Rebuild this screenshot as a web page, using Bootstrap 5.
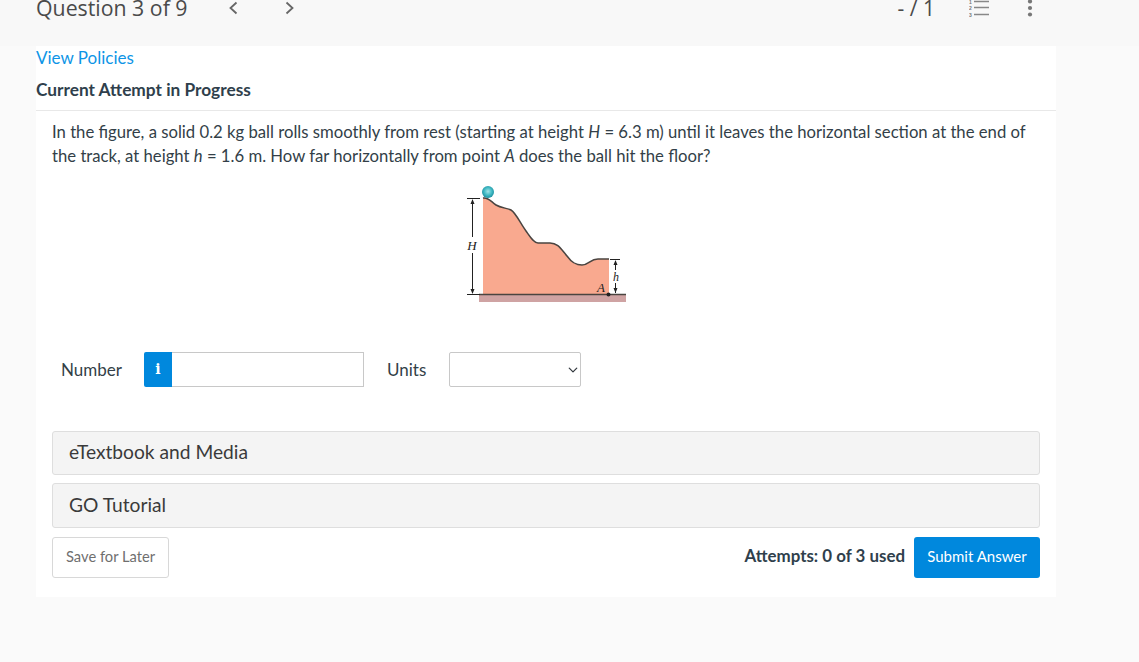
<!DOCTYPE html>
<html>
<head>
    <meta charset="utf-8">
    <link href="https://cdn.jsdelivr.net/npm/bootstrap@5.3.0/dist/css/bootstrap.min.css" rel="stylesheet">
    <style>
        body {
            background: #fafafa;
            font-family: Lato, "Liberation Sans", sans-serif;
            color: #2f3f4c;
            height: 662px;
            overflow: hidden;
        }

        /* top bar */
        .quiz-bar {
            height: 46px;
            background: #f8f8f8;
            padding: 0 106px 0 36px;
            overflow: hidden;
        }
        .quiz-title {
            font-family: "Open Sans", sans-serif;
            font-size: 21.3px;
            line-height: 28px;
            color: #4a4a4a;
            margin-top: -6px;
            width: 191px;
        }
        .quiz-score {
            font-family: "Open Sans", sans-serif;
            font-size: 21px;
            line-height: 28px;
            color: #4a4a4a;
            margin-top: -6px;
            margin-left: auto;
            margin-right: 34px;
        }
        .bar-icon { display: block; flex: none; }
        .next-icon { margin-left: 44px; }
        .more-icon { margin-left: 36px; }

        /* white panel */
        .quiz-panel {
            width: 1020px;
            height: 551px;
            margin-left: 36px;
            background: #fff;
        }
        .policy-link {
            display: block;
            font-size: 17px;
            line-height: 24px;
            color: #0e95e6;
            text-decoration: none;
        }
        .attempt-head {
            font-size: 17.3px;
            line-height: 24px;
            font-weight: 700;
            color: #2f3f4c;
            margin-top: 8px;
            padding-bottom: 8px;
            border-bottom: 1px solid #e8e8e8;
        }
        .question-text {
            font-size: 16.7px;
            line-height: 24px;
            color: #333f48;
            padding: 9px 16px 0;
            margin: 0;
        }
        .question-fig { display: block; margin: 7px 0 0 404px; }

        /* answer row */
        .answer-row { padding: 0 0 0 25px; margin-top: 42px; height: 35px; font-size: 17px; }
        .answer-label { width: 83px; color: #333f48; }
        .info-box {
            width: 28px;
            height: 35px;
            background: #0088dd;
            color: #fff;
            border-radius: 2px 0 0 2px;
            font-family: "DejaVu Serif", serif;
            font-weight: 700;
            font-size: 14px;
        }
        .number-input {
            width: 192px;
            height: 35px;
            border: 1px solid #c8c8c8;
            border-left: 0;
            border-radius: 0;
        }
        .units-label { width: 62px; margin-left: 23px; color: #333f48; }
        .units-select {
            width: 132px;
            height: 35px;
            padding: 0;
            border: 1px solid #c8c8c8;
            border-radius: 2px;
            background-position: right 1px center;
            background-size: 12px 10px;
        }

        /* accordions */
        .extra-block {
            margin: 0 16px;
            padding: 0 0 1px 16px;
            background: #f4f4f4;
            border: 1px solid #dedede;
            border-radius: 3px;
            font-size: 19.2px;
            color: #3a3a3a;
        }
        .extra-media { height: 44px; margin-top: 44px; }
        .extra-tutorial { height: 45px; margin-top: 8px; }

        /* footer row */
        .action-row { margin: 9px 16px 0; }
        .save-btn {
            height: 41px;
            padding: 0 13px 2px;
            font-size: 14.7px;
            color: #6f6f6f;
            background: #fff;
            border: 1px solid #d8d8d8;
            border-radius: 3px;
        }
        .attempts-text { font-size: 16.9px; font-weight: 700; color: #2f3f4c; margin-right: 9px; padding-bottom: 3px; }
        .submit-btn {
            height: 41px;
            width: 126px;
            padding: 0 0 2px;
            font-size: 15px;
            color: #fff;
            background: #0088dd;
            border: 0;
            border-radius: 3px;
        }
    </style>
</head>
<body>
    <div class="quiz-bar d-flex align-items-start">
        <div class="quiz-title">Question 3 of 9</div>
        <svg class="bar-icon" width="12" height="16" viewBox="0 0 12 16"><path d="M9.500 2.500 3.500 8l6 5.500" fill="none" stroke="#666" stroke-width="1.800"/></svg>
        <svg class="bar-icon next-icon" width="12" height="16" viewBox="0 0 12 16"><path d="M3.500 2.500 9.500 8l-6 5.500" fill="none" stroke="#666" stroke-width="1.800"/></svg>
        <div class="quiz-score">- / 1</div>
        <svg class="bar-icon" width="22" height="20" viewBox="0 0 22 20">
            <g fill="none" stroke="#888" stroke-width="1.600"><path d="M5 1.500h15M5 7.500h15M5 14.500h15"/></g>
            <text x="0" y="4" font-size="5" font-weight="700" fill="#777" font-family="Liberation Sans">1</text>
            <text x="0" y="10" font-size="5" font-weight="700" fill="#777" font-family="Liberation Sans">2</text>
            <text x="0" y="17" font-size="5" font-weight="700" fill="#777" font-family="Liberation Sans">3</text>
        </svg>
        <svg class="bar-icon more-icon" width="6" height="20" viewBox="0 0 6 20">
            <circle cx="3" cy="1.500" r="2.100" fill="#777"/><circle cx="3" cy="8" r="2.100" fill="#777"/><circle cx="3" cy="14.500" r="2.100" fill="#777"/>
        </svg>
    </div>

    <div class="quiz-panel">
        <a class="policy-link" href="#">View Policies</a>
        <div class="attempt-head">Current Attempt in Progress</div>
        <p class="question-text">In the figure, a solid 0.2 kg ball rolls smoothly from rest (starting at height <i>H</i> = 6.3 m) until it leaves the horizontal section at the end of the track, at height <i>h</i> = 1.6 m. How far horizontally from point <i>A</i> does the ball hit the floor?</p>

        <svg class="question-fig" width="210" height="135" viewBox="0 0 210 135">
            <defs>
                <radialGradient id="ballFill" cx="50%" cy="45%" r="55%">
                    <stop offset="0" stop-color="#a5e3e6"/>
                    <stop offset="0.55" stop-color="#45bcc6"/>
                    <stop offset="1" stop-color="#1b8f9f"/>
                </radialGradient>
            </defs>
            <rect x="39" y="119" width="147" height="8" fill="#cfa3a3"/>
            <path d="M43 23C49 22 51 27 56 30C61 33 67 33 71 35C76 38 80 48 86 56C91 63 94 68 98 68H110C118 68 121 74 127 81C132 88 136 90 142 90C149 90 150 84 158 84H169V119H43Z" fill="#f9a98f"/>
            <path d="M43 23C49 22 51 27 56 30C61 33 67 33 71 35C76 38 80 48 86 56C91 63 94 68 98 68H110C118 68 121 74 127 81C132 88 136 90 142 90C149 90 150 84 158 84H169" fill="none" stroke="#4a4440" stroke-width="1.500"/>
            <path d="M39 119.500H186" stroke="#4a4440" stroke-width="1.500"/>
            <circle cx="48" cy="17" r="6" fill="url(#ballFill)"/>
            <path d="M27 23.500H40M27 119.500H40M170 84.500H180" stroke="#222" stroke-width="1"/>
            <path d="M32.500 25V62M32.500 78V118M175.500 86V95M175.500 108V118" stroke="#222" stroke-width="1"/>
            <path d="M32.500 24 30.500 29H34.500ZM32.500 119 30.500 114H34.500ZM175.500 85 173.500 90H177.500ZM175.500 118 173.500 113H177.500Z" fill="#222"/>
            <text x="32" y="74.500" font-family="Liberation Serif" font-style="italic" font-size="13" fill="#222" text-anchor="middle">H</text>
            <text x="176" y="105.500" font-family="Liberation Serif" font-style="italic" font-size="12" fill="#222" text-anchor="middle">h</text>
            <text x="157" y="116.500" font-family="Liberation Serif" font-style="italic" font-size="13" fill="#222">A</text>
            <circle cx="168.500" cy="119.500" r="2" fill="#222"/>
        </svg>

        <div class="answer-row d-flex align-items-center">
            <div class="answer-label">Number</div>
            <div class="info-box d-flex align-items-center justify-content-center">i</div>
            <input class="number-input form-control" type="text">
            <div class="units-label">Units</div>
            <select class="units-select form-select"><option></option></select>
        </div>

        <div class="extra-block extra-media d-flex align-items-center">eTextbook and Media</div>
        <div class="extra-block extra-tutorial d-flex align-items-center">GO Tutorial</div>

        <div class="action-row d-flex align-items-center">
            <button type="button" class="save-btn btn">Save for Later</button>
            <span class="attempts-text ms-auto">Attempts: 0 of 3 used</span>
            <button type="button" class="submit-btn btn">Submit Answer</button>
        </div>
    </div>

    <script src="https://cdn.jsdelivr.net/npm/bootstrap@5.3.0/dist/js/bootstrap.bundle.min.js"></script>
</body>
</html>
